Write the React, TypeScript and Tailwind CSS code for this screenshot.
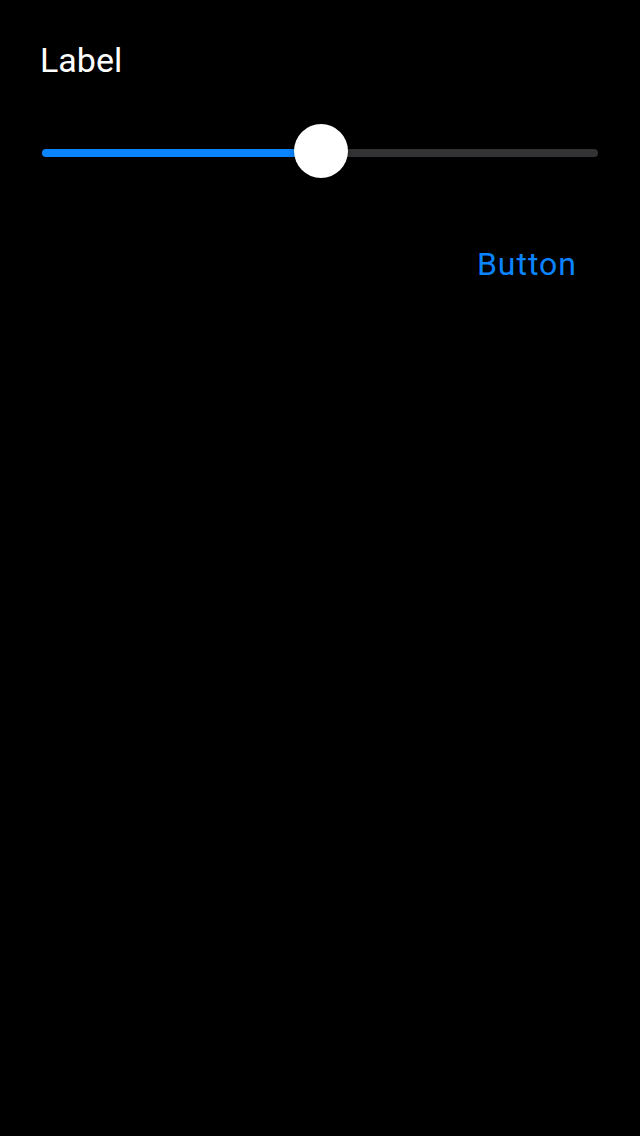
import React from "react";

export default function App() {
  return (
    <div className="min-h-[1136px] w-[640px] bg-black text-white" style={{ fontFamily: "Roboto, 'Noto Sans', sans-serif" }}>
      <div className="pt-[40px] pl-[40px]">
        <div className="text-[34px] leading-[41px] text-white">Label</div>
      </div>
      <div className="mt-[43px] px-[42px]">
        <div className="flex h-[54px] items-start">
          <div className="mt-[25px] h-[8px] w-[279px] shrink-0 rounded-l-full bg-[#0a84ff]" />
          <div className="relative z-10 -ml-[27px] h-[54px] w-[54px] shrink-0 rounded-full bg-white shadow-[0_2px_6px_rgba(0,0,0,0.3)]" />
          <div className="-ml-[27px] mt-[25px] h-[8px] flex-1 rounded-r-full bg-[#333335]" />
        </div>
      </div>
      <div className="mt-[67px] flex justify-end pr-[63px]">
        <button className="text-[32px] leading-[38px] tracking-[1px] text-[#0a84ff]">Button</button>
      </div>
    </div>
  );
}
